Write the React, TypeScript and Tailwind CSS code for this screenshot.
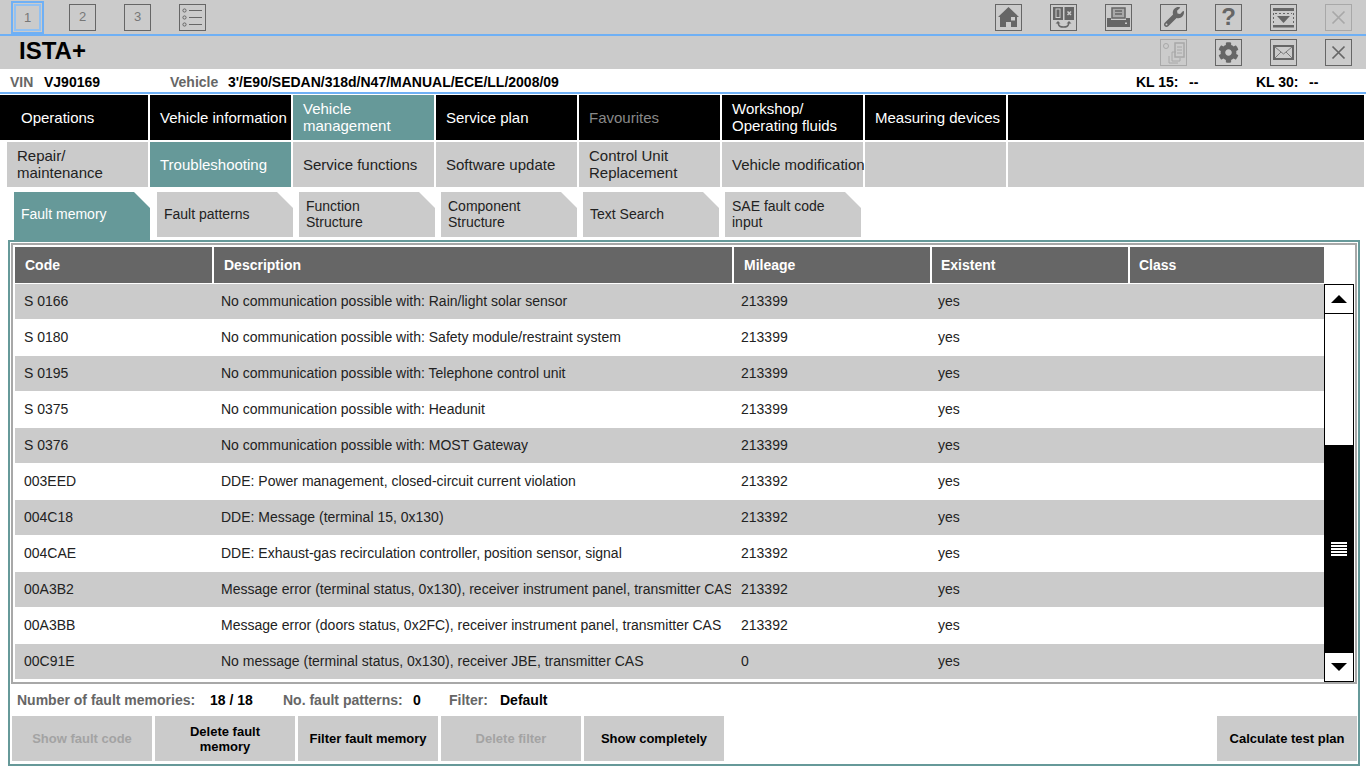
import { FaCog, FaWrench } from 'react-icons/fa'
import type { ReactNode } from 'react'

const mainNav = [['Operations'], ['Vehicle information'], ['Vehicle', 'management'], ['Service plan'], ['Favourites'], ['Workshop/', 'Operating fluids'], ['Measuring devices']]
const subNav = [['Repair/', 'maintenance'], ['Troubleshooting'], ['Service functions'], ['Software update'], ['Control Unit', 'Replacement'], ['Vehicle modification'], []]
const tabs = [['Fault memory'], ['Fault patterns'], ['Function', 'Structure'], ['Component', 'Structure'], ['Text Search'], ['SAE fault code', 'input']]

const faults = [
  ['S 0166', 'No communication possible with: Rain/light solar sensor', '213399'],
  ['S 0180', 'No communication possible with: Safety module/restraint system', '213399'],
  ['S 0195', 'No communication possible with: Telephone control unit', '213399'],
  ['S 0375', 'No communication possible with: Headunit', '213399'],
  ['S 0376', 'No communication possible with: MOST Gateway', '213399'],
  ['003EED', 'DDE: Power management, closed-circuit current violation', '213392'],
  ['004C18', 'DDE: Message (terminal 15, 0x130)', '213392'],
  ['004CAE', 'DDE: Exhaust-gas recirculation controller, position sensor, signal', '213392'],
  ['00A3B2', 'Message error (terminal status, 0x130), receiver instrument panel, transmitter CAS', '213392'],
  ['00A3BB', 'Message error (doors status, 0x2FC), receiver instrument panel, transmitter CAS', '213392'],
  ['00C91E', 'No message (terminal status, 0x130), receiver JBE, transmitter CAS', '0'],
]

function IconBox({ children, faded }: { children: ReactNode; faded?: boolean }) {
  return (
    <div className={`flex h-[27px] w-[27px] items-center justify-center border-[1.5px] ${faded ? 'border-[#a8a8a8] text-[#a8a8a8]' : 'border-[#666666] text-[#666666]'}`}>
      {children}
    </div>
  )
}

function CloseIcon() {
  return (
    <svg width="15" height="15" viewBox="0 0 15 15" stroke="currentColor" strokeWidth="1.7">
      <path d="M1.500 1.500 13.500 13.500M13.500 1.500 1.500 13.500" />
    </svg>
  )
}

function Lines({ lines }: { lines: string[] }) {
  if (lines.length < 2) return <span className="whitespace-nowrap">{lines[0]}</span>
  return (
    <span className="mb-[2px]">
      {lines[0]}
      <br />
      {lines[1]}
    </span>
  )
}

export default function App() {
  return (
    <div className="h-[768px] w-[1366px] overflow-hidden bg-white font-['Liberation_Sans',Arial,sans-serif] text-black">
      {/* top toolbar */}
      <div className="flex h-[34px] items-center bg-[#cbcbcb] pl-[11px] pr-[14px]">
        <div className="flex h-[33px] w-[33px] items-center justify-center self-end border-2 border-[#6fb0f5] bg-[#cbcbcb]">
          <div className="flex h-[27px] w-[27px] items-center justify-center border-2 border-[#92c1f2] text-[13px] text-[#777777]">1</div>
        </div>
        <div className="ml-[25px] flex gap-[28px]">
          <IconBox><span className="text-[13px] text-[#777777]">2</span></IconBox>
          <IconBox><span className="text-[13px] text-[#777777]">3</span></IconBox>
          <IconBox>
            <svg width="23" height="21" viewBox="0 0 23 21" fill="none" stroke="currentColor">
              <circle cx="3.500" cy="3.500" r="1.600" />
              <circle cx="3.500" cy="10.500" r="1.600" />
              <circle cx="3.500" cy="17.500" r="1.600" />
              <path d="M8 3.500h13M8 10.500h13M8 17.500h13" strokeWidth="1.200" />
            </svg>
          </IconBox>
        </div>
        <div className="ml-auto flex gap-[28px]">
          <IconBox>
            <svg width="21" height="20" viewBox="0 0 21 20" fill="currentColor">
              <path d="M10.500 0 21 10h-2v10h-6v-5H8v5H2V10H0Z" />
              <rect x="13" y="10" width="4" height="3.500" fill="#cbcbcb" />
            </svg>
          </IconBox>
          <IconBox>
            <svg width="23" height="23" viewBox="0 0 23 23">
              <rect x="1" y="1" width="10" height="13" fill="currentColor" />
              <rect x="12.500" y="1" width="9.500" height="13" fill="currentColor" />
              <rect x="4" y="3" width="4" height="8.500" fill="none" stroke="#cbcbcb" />
              <path d="M15.500 5.500 19 9M19 5.500 15.500 9" stroke="#cbcbcb" strokeWidth="1.500" />
              <path d="M6 17c1 4 3 4 5.500 4s4.500 0 5.500-4" fill="none" stroke="currentColor" strokeWidth="1.500" />
              <path d="M3.500 17.500h5L6 15ZM14.500 17.500h5L17 15Z" fill="currentColor" />
            </svg>
          </IconBox>
          <IconBox>
            <svg width="23" height="21" viewBox="0 0 23 21" fill="currentColor">
              <path d="M5 1h13v10H5z" fill="#a9a9a9" stroke="currentColor" strokeWidth="1.500" />
              <path d="M8 4h7M8 7h7" stroke="currentColor" strokeWidth="1.300" />
              <path d="M0 11h4v2h15v-2h4v9H0z" />
              <rect x="18" y="15.500" width="2" height="1.500" fill="#cbcbcb" />
            </svg>
          </IconBox>
          <IconBox><FaWrench size={20} /></IconBox>
          <IconBox><span className="text-[24px] font-bold leading-none">?</span></IconBox>
          <IconBox>
            <svg width="23" height="21" viewBox="0 0 23 21" fill="currentColor">
              <rect x="1" y="1" width="21" height="3" />
              <rect x="1" y="18" width="21" height="2.500" />
              <path d="M5 9h13l-6.500 7z" />
              <path d="M1.500 6v11M21.500 6v11" stroke="currentColor" strokeDasharray="2 2" />
              <path d="M3 6.500h17" stroke="currentColor" strokeDasharray="2 2" />
            </svg>
          </IconBox>
          <IconBox faded><CloseIcon /></IconBox>
        </div>
      </div>
      <div className="h-[2px] bg-[#6fb0f5]" />

      {/* title bar */}
      <div className="flex h-[33px] items-center bg-[#cbcbcb] pl-[19px] pr-[14px]">
        <span className="mb-[4px] text-[24px] font-bold leading-none">ISTA+</span>
        <div className="ml-auto flex gap-[28px]">
          <IconBox faded>
            <svg width="24" height="24" viewBox="0 0 24 24" fill="none" stroke="currentColor">
              <circle cx="4" cy="5" r="2.500" />
              <path d="M10 11h4M10 11v9h8v-3" />
              <path d="M7 15v7h9" />
              <rect x="13" y="2" width="9" height="14" strokeWidth="1.500" />
              <path d="M15 6h5M15 9h5M15 12h5" />
            </svg>
          </IconBox>
          <IconBox><FaCog size={21} /></IconBox>
          <IconBox>
            <svg width="21" height="15" viewBox="0 0 21 15" fill="none" stroke="currentColor">
              <rect x="1" y="1" width="19" height="13" strokeWidth="2" />
              <path d="M2 2 10.500 9 19 2M2 13l6-6M19 13l-6-6" strokeWidth="0.800" />
            </svg>
          </IconBox>
          <IconBox><CloseIcon /></IconBox>
        </div>
      </div>

      {/* vehicle info */}
      <div className="flex h-[23px] items-center pt-[4px] text-[14px] font-bold">
        <span className="ml-[10px] w-[34px] text-[#666666]">VIN</span>
        <span className="w-[126px]">VJ90169</span>
        <span className="w-[58px] text-[#666666]">Vehicle</span>
        <span>3'/E90/SEDAN/318d/N47/MANUAL/ECE/LL/2008/09</span>
        <span className="ml-auto w-[53px]">KL 15:</span>
        <span className="w-[67px]">--</span>
        <span className="w-[53px]">KL 30:</span>
        <span className="w-[57px]">--</span>
      </div>
      <div className="h-[2px] bg-[#6fb0f5]" />

      {/* main nav */}
      <div className="mt-px flex h-[45px] gap-[2px] pr-[2px]">
        {mainNav.map((item, i) => (
          <div
            key={item[0]}
            className={`flex items-center overflow-hidden text-[15px] leading-[17px] ${i === 0 ? 'w-[148px] pl-[21px]' : 'w-[141px] pl-[10px]'} ${i === 2 ? 'bg-[#669999] text-white' : i === 4 ? 'bg-black text-[#888888]' : 'bg-black text-white'}`}
          >
            <Lines lines={item} />
          </div>
        ))}
        <div className="flex-1 bg-black" />
      </div>

      {/* sub nav */}
      <div className="mt-[2px] flex h-[45px] gap-[2px] pl-[7px] pr-[2px]">
        {subNav.map((item, i) => (
          <div
            key={i}
            className={`flex w-[141px] items-center pl-[10px] text-[15px] leading-[17px] ${i === 1 ? 'bg-[#669999] text-white' : 'bg-[#cbcbcb] text-[#222222]'}`}
          >
            <Lines lines={item} />
          </div>
        ))}
        <div className="flex-1 bg-[#cbcbcb]" />
      </div>

      {/* tabs */}
      <div className="mt-[5px] flex h-[48px] items-start gap-[6px] pl-[14px]">
        {tabs.map((tab, i) => (
          <div
            key={tab[0]}
            className={`flex w-[136px] items-center pl-[7px] text-[14px] leading-[16px] [clip-path:polygon(0_0,120px_0,100%_16px,100%_100%,0_100%)] ${i === 0 ? 'h-[48px] bg-[#669999] pb-[5px] text-white' : 'h-[45px] bg-[#cbcbcb] pb-[2px] text-[#222222]'} ${i === 1 ? 'ml-px' : ''}`}
          >
            <span>
              {tab[0]}
              {tab[1] && <br />}
              {tab[1]}
            </span>
          </div>
        ))}
      </div>

      {/* fault panel */}
      <div className="ml-[8px] h-[526px] w-[1352px] border-2 border-[#669999] px-[1px] pt-[1px]">
        <div className="h-[441px] border-2 border-[#a8a8a8] pl-[2px] pt-[2px]">
          <div className="grid h-[36px] w-[1309px] grid-cols-[197px_518px_196px_196px_1fr] gap-x-[2px] text-[14px] font-bold text-white">
            {['Code', 'Description', 'Mileage', 'Existent', 'Class'].map((h, i) => (
              <div key={h} className={`flex items-center bg-[#666666] ${i === 3 || i === 4 ? 'pl-[9px]' : 'pl-[10px]'}`}>
                {h}
              </div>
            ))}
          </div>
          <div className="mt-px flex">
            <div className="w-[1309px] text-[14px] text-[#222222]">
              {faults.map((f, i) => (
                <div key={f[0]} className={`grid grid-cols-[199px_520px_198px_198px_1fr] items-center ${i % 2 === 0 ? 'h-[35px] bg-[#cbcbcb]' : 'h-[37px] bg-white'}`}>
                  <div className="pl-[9px]">{f[0]}</div>
                  <div className="w-[517px] overflow-hidden whitespace-nowrap pl-[7px]">{f[1]}</div>
                  <div className="pl-[7px]">{f[2]}</div>
                  <div className="pl-[6px]">yes</div>
                  <div />
                </div>
              ))}
            </div>
            {/* scrollbar */}
            <div className="flex h-[398px] w-[30px] flex-col border border-black bg-white">
              <div className="flex h-[29px] items-center justify-center border-b border-black">
                <div className="h-0 w-0 border-x-[8px] border-b-[8px] border-x-transparent border-b-black" />
              </div>
              <div className="h-[131px]" />
              <div className="flex flex-1 flex-col items-center justify-center gap-px bg-black">
                <div className="h-[2px] w-[16px] bg-white" />
                <div className="h-[2px] w-[16px] bg-white" />
                <div className="h-[2px] w-[16px] bg-white" />
                <div className="h-[2px] w-[16px] bg-white" />
                <div className="h-[2px] w-[16px] bg-white" />
              </div>
              <div className="flex h-[28px] items-center justify-center">
                <div className="h-0 w-0 border-x-[8px] border-t-[8px] border-x-transparent border-t-black" />
              </div>
            </div>
          </div>
        </div>

        <div className="flex h-[32px] items-center pl-[6px] text-[14px] font-bold">
          <span className="w-[193px] text-[#666666]">Number of fault memories:</span>
          <span className="w-[73px]">18 / 18</span>
          <span className="w-[130px] text-[#666666]">No. fault patterns:</span>
          <span className="w-[36px]">0</span>
          <span className="w-[51px] text-[#666666]">Filter:</span>
          <span>Default</span>
        </div>

        <div className="flex h-[45px] gap-[3px] pl-px text-[13px] font-bold leading-[15px]">
          <button className="w-[140px] bg-[#cbcbcb] text-[#a3a3a3]">Show fault code</button>
          <button className="w-[140px] bg-[#cbcbcb]">Delete fault<br />memory</button>
          <button className="w-[140px] bg-[#cbcbcb]">Filter fault memory</button>
          <button className="w-[140px] bg-[#cbcbcb] text-[#a3a3a3]">Delete filter</button>
          <button className="w-[140px] bg-[#cbcbcb]">Show completely</button>
          <button className="ml-auto w-[140px] bg-[#cbcbcb]">Calculate test plan</button>
        </div>
      </div>
    </div>
  )
}
